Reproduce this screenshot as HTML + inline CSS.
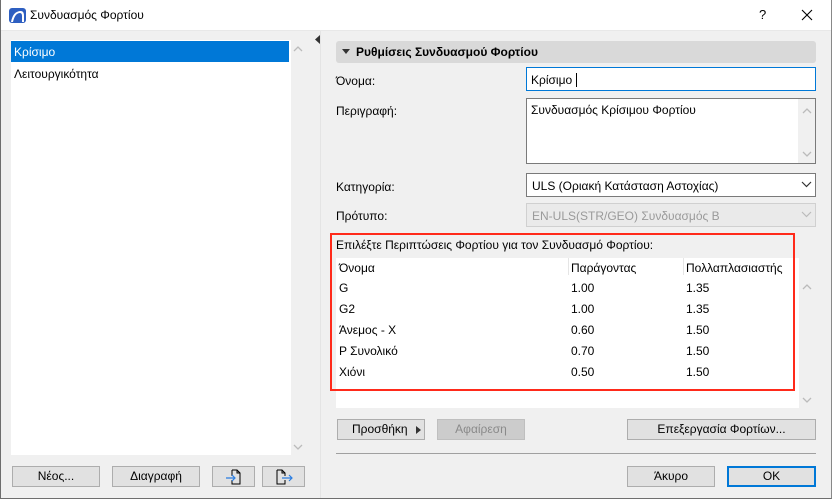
<!DOCTYPE html>
<html><head><meta charset="utf-8"><style>
*{box-sizing:border-box;margin:0;padding:0}
body{width:832px;height:499px;overflow:hidden;font-family:"Liberation Sans",sans-serif;font-size:12px;color:#000;background:#f0f0f0;position:relative}
.a{position:absolute}
.win{left:0;top:0;width:832px;height:499px;border:1px solid #6e6e6e;border-top:none;border-right:1px solid #888}
.btn{position:absolute;background:#e1e1e1;border:1px solid #adadad;text-align:center;line-height:19px;height:21px}
.t{position:absolute;white-space:nowrap}
</style></head><body>
<div class="a" style="left:0;top:0;width:832px;height:31px;background:#fff;border-bottom:1px solid #e8e8e8"></div>
<svg class="a" style="left:9px;top:8px" width="17" height="15"><rect x="0" y="0" width="17" height="15" rx="3" fill="#2e5fc1"/><path d="M2 14 Q4 3 12 3 Q15 3 15 8 L15 14 L13 14 L13 8 Q13 5 11 5 Q6 5 4 14Z" fill="#fff"/></svg>
<div class="t" style="left:30px;top:8px;font-size:12px">Συνδυασμός Φορτίου</div>
<div class="t" style="left:759px;top:7px;font-size:13px">?</div>
<svg class="a" style="left:801px;top:9px" width="12" height="12"><path d="M1 1L11 11M11 1L1 11" stroke="#000" stroke-width="1.1"/></svg>

<div class="a" style="left:11px;top:40px;width:280px;height:415px;background:#fff"></div>
<div class="a" style="left:11px;top:41px;width:278px;height:21px;background:#0078d7"></div>
<div class="t" style="left:14px;top:45px;color:#fff">Κρίσιμο</div>
<div class="t" style="left:14px;top:67px">Λειτουργικότητα</div>
<svg class="a" style="left:293px;top:45px" width="10" height="8"><path d="M1 6L5 2L9 6" stroke="#bbb" fill="none" stroke-width="1.3"/></svg>
<svg class="a" style="left:293px;top:443px" width="10" height="8"><path d="M1 2L5 6L9 2" stroke="#bbb" fill="none" stroke-width="1.3"/></svg>
<div class="a" style="left:320px;top:31px;width:1px;height:468px;background:#e4e4e4"></div>
<svg class="a" style="left:315px;top:35px" width="5" height="9"><path d="M5 0L0 4.5L5 9Z" fill="#333"/></svg>

<div class="btn" style="left:12px;top:466px;width:88px">Νέος...</div>
<div class="btn" style="left:112px;top:466px;width:88px">Διαγραφή</div>
<div class="btn" style="left:212px;top:466px;width:43px"><svg width="20" height="18" style="margin-top:1px"><path d="M8 2H13L16 5V16H8V12M8 8V2" stroke="#000" fill="none"/><path d="M13 2V5H16" stroke="#000" fill="none"/><path d="M2 10H11M8 7L11 10L8 13" stroke="#2a7de1" fill="none" stroke-width="1.2"/></svg></div>
<div class="btn" style="left:262px;top:466px;width:43px"><svg width="20" height="18" style="margin-top:1px"><path d="M3 2H8L11 5V8M11 12V16H3V2" stroke="#000" fill="none"/><path d="M8 2V5H11" stroke="#000" fill="none"/><path d="M8 10H18M15 7L18 10L15 13" stroke="#2a7de1" fill="none" stroke-width="1.2"/></svg></div>

<div class="a" style="left:336px;top:41px;width:480px;height:22px;background:#d9d9d9;border-radius:3px"></div>
<svg class="a" style="left:342px;top:49px" width="8" height="5"><path d="M0 0H8L4 5Z" fill="#333"/></svg>
<div class="t" style="left:356px;top:45px;font-weight:bold">Ρυθμίσεις Συνδυασμού Φορτίου</div>
<div class="t" style="left:336px;top:74px">Όνομα:</div>
<div class="a" style="left:526px;top:67px;width:290px;height:24px;background:#fff;border:1px solid #0078d7"></div>
<div class="t" style="left:531px;top:73px">Κρίσιμο</div>
<div class="a" style="left:576px;top:73px;width:1px;height:14px;background:#000"></div>
<div class="t" style="left:336px;top:104px">Περιγραφή:</div>
<div class="a" style="left:526px;top:98px;width:290px;height:66px;background:#fff;border:1px solid #7a7a7a"></div>
<div class="a" style="left:798px;top:99px;width:17px;height:64px;background:#f0f0f0"></div>
<svg class="a" style="left:802px;top:107px" width="10" height="8"><path d="M1 6L5 2L9 6" stroke="#bbb" fill="none" stroke-width="1.3"/></svg>
<svg class="a" style="left:802px;top:150px" width="10" height="8"><path d="M1 2L5 6L9 2" stroke="#bbb" fill="none" stroke-width="1.3"/></svg>
<div class="t" style="left:531px;top:103px">Συνδυασμός Κρίσιμου Φορτίου</div>
<div class="t" style="left:336px;top:180px">Κατηγορία:</div>
<div class="a" style="left:526px;top:173px;width:290px;height:24px;background:#fff;border:1px solid #7a7a7a"></div>
<div class="t" style="left:532px;top:179px">ULS (Οριακή Κατάσταση Αστοχίας)</div>
<svg class="a" style="left:801px;top:181px" width="11" height="7"><path d="M1 1L5.5 5.5L10 1" stroke="#333" fill="none" stroke-width="1.2"/></svg>
<div class="t" style="left:336px;top:209px">Πρότυπο:</div>
<div class="a" style="left:526px;top:203px;width:290px;height:24px;background:#eaeaea;border:1px solid #d0d0d0"></div>
<div class="t" style="left:532px;top:209px;color:#9a9a9a">EN-ULS(STR/GEO) Συνδυασμός B</div>
<svg class="a" style="left:801px;top:211px" width="11" height="7"><path d="M1 1L5.5 5.5L10 1" stroke="#bbb" fill="none" stroke-width="1.2"/></svg>

<div class="a" style="left:336px;top:258px;width:464px;height:150px;background:#fff"></div>
<div class="a" style="left:799px;top:258px;width:17px;height:150px;background:#f0f0f0"></div>
<svg class="a" style="left:802px;top:283px" width="10" height="8"><path d="M1 6L5 2L9 6" stroke="#bbb" fill="none" stroke-width="1.3"/></svg>
<svg class="a" style="left:802px;top:396px" width="10" height="8"><path d="M1 2L5 6L9 2" stroke="#bbb" fill="none" stroke-width="1.3"/></svg>
<div class="a" style="left:568px;top:258px;width:1px;height:17px;background:#e5e5e5"></div>
<div class="a" style="left:683px;top:258px;width:1px;height:17px;background:#e5e5e5"></div>
<div class="a" style="left:330px;top:233px;width:465px;height:158px;border:2px solid #ff2a1a"></div>
<div class="t" style="left:336px;top:238px">Επιλέξτε Περιπτώσεις Φορτίου για τον Συνδυασμό Φορτίου:</div>
<div class="t" style="left:339px;top:261px">Όνομα</div><div class="t" style="left:571px;top:261px">Παράγοντας</div><div class="t" style="left:686px;top:261px">Πολλαπλασιαστής</div>
<div class="t" style="left:339px;top:281px">G</div><div class="t" style="left:571px;top:281px">1.00</div><div class="t" style="left:686px;top:281px">1.35</div>
<div class="t" style="left:339px;top:302px">G2</div><div class="t" style="left:571px;top:302px">1.00</div><div class="t" style="left:686px;top:302px">1.35</div>
<div class="t" style="left:339px;top:323px">Άνεμος - X</div><div class="t" style="left:571px;top:323px">0.60</div><div class="t" style="left:686px;top:323px">1.50</div>
<div class="t" style="left:339px;top:344px">P Συνολικό</div><div class="t" style="left:571px;top:344px">0.70</div><div class="t" style="left:686px;top:344px">1.50</div>
<div class="t" style="left:339px;top:365px">Χιόνι</div><div class="t" style="left:571px;top:365px">0.50</div><div class="t" style="left:686px;top:365px">1.50</div>

<div class="btn" style="left:337px;top:419px;width:88px;text-align:left;padding-left:14px">Προσθήκη<svg style="position:absolute;left:78px;top:6px" width="5" height="8"><path d="M0 0L5 4L0 8Z" fill="#333"/></svg></div>
<div class="btn" style="left:437px;top:419px;width:88px;background:#ccc;border-color:#bfbfbf;color:#8a8a8a">Αφαίρεση</div>
<div class="btn" style="left:627px;top:419px;width:189px">Επεξεργασία Φορτίων...</div>
<div class="a" style="left:336px;top:453px;width:480px;height:1px;background:#a0a0a0"></div>
<div class="btn" style="left:627px;top:466px;width:88px">Άκυρο</div>
<div class="btn" style="left:727px;top:466px;width:89px;border:2px solid #0078d7;line-height:17px">OK</div>
<div class="a win"></div>
</body></html>
